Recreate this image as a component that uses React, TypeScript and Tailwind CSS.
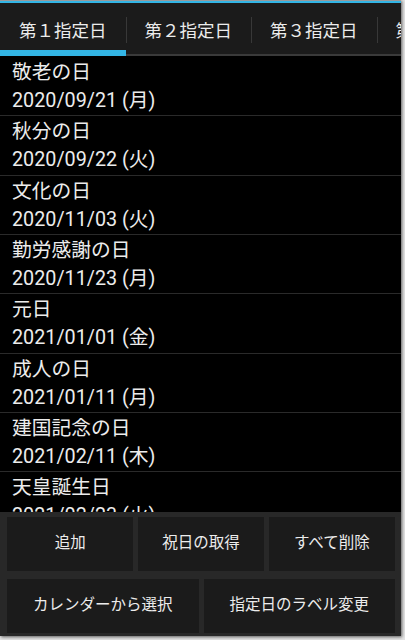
import React from "react";

const items = [
  ["敬老の日", "2020/09/21 (月)"],
  ["秋分の日", "2020/09/22 (火)"],
  ["文化の日", "2020/11/03 (火)"],
  ["勤労感謝の日", "2020/11/23 (月)"],
  ["元日", "2021/01/01 (金)"],
  ["成人の日", "2021/01/11 (月)"],
  ["建国記念の日", "2021/02/11 (木)"],
  ["天皇誕生日", "2021/02/23 (火)"],
];

const tabs = ["第１指定日", "第２指定日", "第３指定日", "第４指定日"];

export default function App() {
  return (
    <div
      className="w-[405px] h-[640px] bg-[#e4e4e4] overflow-hidden"
      style={{ fontFamily: 'Roboto, "Noto Sans CJK JP", sans-serif' }}
    >
      <div className="w-[401px] h-[636px] bg-black flex flex-col shadow-[1px_1px_3px_rgba(0,0,0,0.6)] border-t border-[#9a9a9a]">
        <div className="h-[2px] bg-[#33b5e5] shrink-0" />
        <div className="h-[53px] shrink-0 bg-[#1b1b1b] flex overflow-hidden relative">
          <div className="absolute left-0 right-0 bottom-0 h-[2px] bg-[#3a3a3a]" />
          {tabs.map((t, i) => (
            <div
              key={t}
              className="relative w-[125.5px] shrink-0 flex items-center justify-center text-[17.5px] text-[#ececec]"
            >
              <span className="pt-[3px]">{t}</span>
              {i > 0 && (
                <div className="absolute left-0 top-[14px] h-[26px] w-px bg-[#383838]" />
              )}
              {i === 0 && (
                <div className="absolute left-0 right-0 bottom-0 h-[6px] bg-[#33b5e5]" />
              )}
            </div>
          ))}
        </div>
        <div className="flex-1 overflow-hidden pt-px">
          {items.map(([name, date]) => (
            <div
              key={name}
              className="h-[59.33px] shrink-0 border-b border-[#2a2a2a] px-[12px] pt-[2px] text-[19.75px] leading-[28px] text-[#ececec]"
            >
              <div>{name}</div>
              <div>{date}</div>
            </div>
          ))}
        </div>
        <div className="h-[124px] shrink-0 bg-[#282828] pl-[7px] pr-[6px] pt-[5px] flex flex-col gap-[8px]">
          <div className="grid grid-cols-3 gap-[4.5px] h-[54px]">
            {["追加", "祝日の取得", "すべて削除"].map((b) => (
              <div
                key={b}
                className="bg-[#1b1b1b] flex items-center justify-center text-[15.5px] text-[#ececec]"
              >
                {b}
              </div>
            ))}
          </div>
          <div className="grid grid-cols-2 gap-[5px] h-[54px]">
            {["カレンダーから選択", "指定日のラベル変更"].map((b) => (
              <div
                key={b}
                className="bg-[#1b1b1b] flex items-center justify-center text-[15.5px] text-[#ececec]"
              >
                {b}
              </div>
            ))}
          </div>
        </div>
      </div>
    </div>
  );
}
